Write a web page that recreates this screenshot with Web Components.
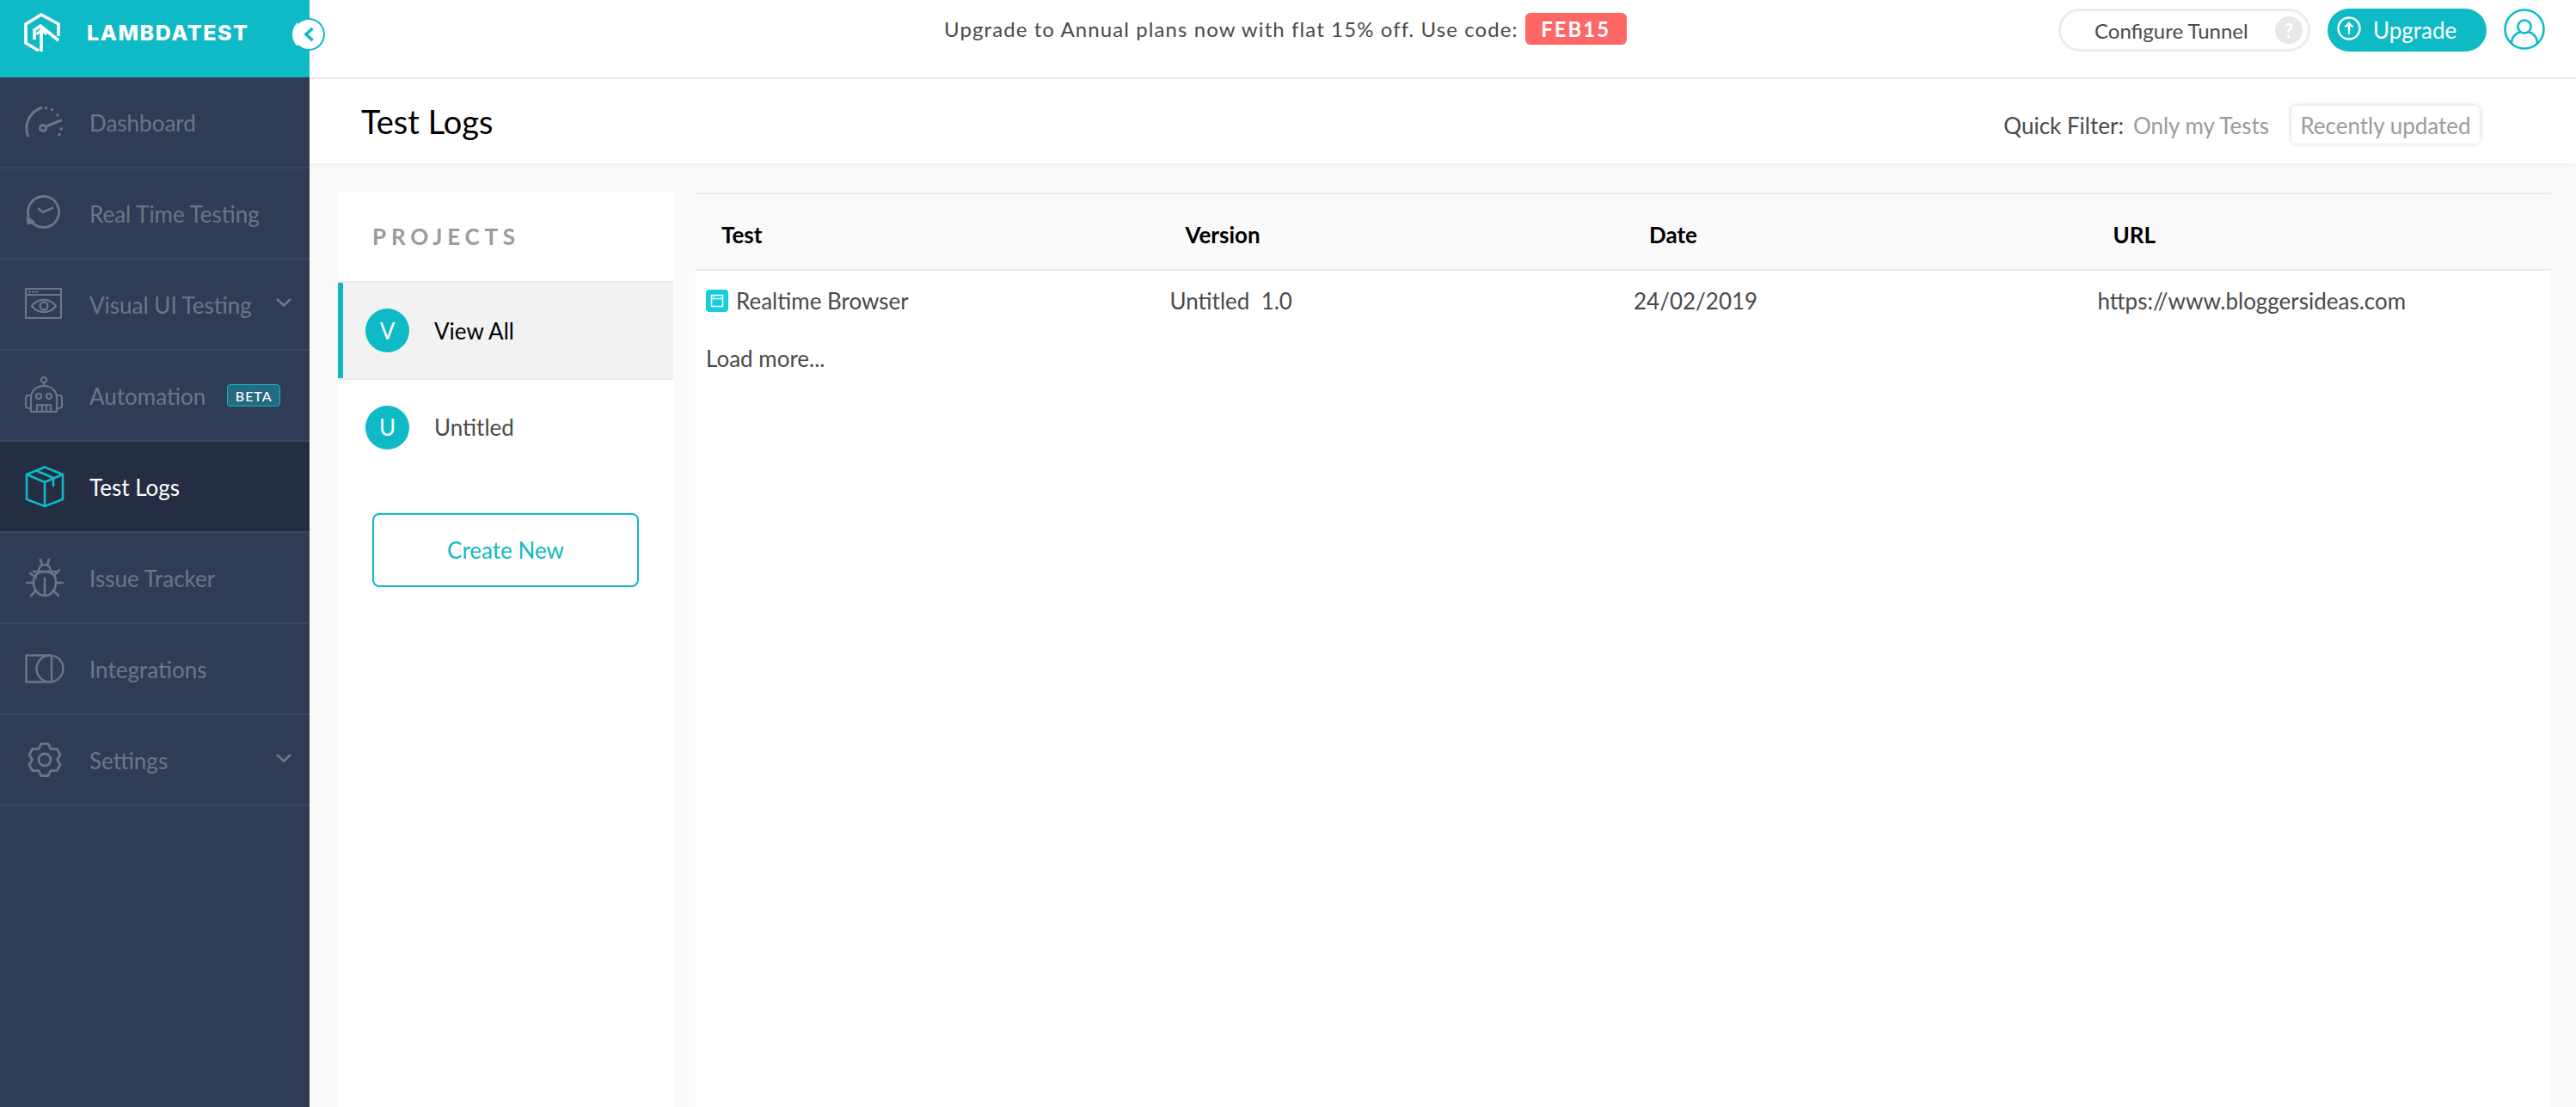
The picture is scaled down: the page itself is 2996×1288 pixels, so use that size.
<!DOCTYPE html>
<html>
<head>
<meta charset="utf-8">
<title>Test Logs</title>
<style>
  html, body { margin: 0; height: 100%; overflow: hidden; background: #fafafa; }
  body { font-family: Lato, "Open Sans", sans-serif; }
</style>
</head>
<body>
<lt-app>
  <lt-sidebar slot="sidebar">
    <lt-nav-item label="Dashboard">
      <svg slot="icon" viewBox="0 0 48 48" fill="none" stroke="currentColor" stroke-width="3" stroke-linecap="round">
        <path d="M8.5 40A25 25 0 0 1 24 7.5"/>
        <circle cx="26" cy="31" r="3.6"/>
        <path d="M30 29L47 22"/>
        <path d="M29.5 7.7h.1M36.5 9.5h.1M43 16h.1M47 32h.1M45 38.5h.1" stroke-width="3.4"/>
      </svg>
    </lt-nav-item>
    <lt-nav-item label="Real Time Testing">
      <svg slot="icon" viewBox="0 0 48 48" fill="none" stroke="currentColor" stroke-width="2.8" stroke-linecap="round" stroke-linejoin="round">
        <path d="M9.2 27A18 18 0 1 1 12 33"/>
        <path d="M8 29l1 7 6-1.5z" fill="currentColor"/>
        <path d="M21 19l5 4 11-5"/>
      </svg>
    </lt-nav-item>
    <lt-nav-item label="Visual UI Testing" chevron>
      <svg slot="icon" viewBox="0 0 48 48" fill="none" stroke="currentColor" stroke-width="2.2" stroke-linecap="round" stroke-linejoin="round">
        <rect x="6" y="6" width="41" height="34"/>
        <path d="M6 13h41"/>
        <path d="M10 9.7h1M14 9.7h1M18 9.7h1"/>
        <path d="M13 26c7-9.5 21-9.5 28 0-7 9.5-21 9.5-28 0z"/>
        <circle cx="27" cy="26" r="4.4"/>
      </svg>
    </lt-nav-item>
    <lt-nav-item label="Automation" beta>
      <svg slot="icon" viewBox="0 0 48 48" fill="none" stroke="currentColor" stroke-width="2.2" stroke-linecap="round" stroke-linejoin="round">
        <circle cx="27" cy="6" r="3.2"/>
        <path d="M27 9v4"/>
        <path d="M12 43V27c0-8 6-14 15-14s15 6 15 14v16z"/>
        <path d="M12 24H9c-3 0-3 2-3 3v9c0 2 2 3 4 3h2M42 24h3c3 0 3 2 3 3v9c0 2-2 3-4 3h-2"/>
        <circle cx="21" cy="25" r="3"/>
        <circle cx="33" cy="25" r="3"/>
        <path d="M19 43v-8h16v8M25 35v8M30 35v8"/>
      </svg>
    </lt-nav-item>
    <lt-nav-item label="Test Logs" active>
      <svg slot="icon" viewBox="0 0 48 48" fill="none" stroke="currentColor" stroke-width="2.6" stroke-linejoin="round" stroke-linecap="round">
        <path d="M28 1.5L49 10v29L28 47 7 39V10z"/>
        <path d="M7 10l21 9 21-9M28 19v28"/>
        <path d="M18 5.5L38 14v9"/>
      </svg>
    </lt-nav-item>
    <lt-nav-item label="Issue Tracker">
      <svg slot="icon" viewBox="0 0 48 48" fill="none" stroke="currentColor" stroke-width="2.6" stroke-linecap="round" stroke-linejoin="round">
        <path d="M15 17h26"/>
        <path d="M15 30c0-9 5-13 13-13s13 4 13 13-6 15-13 15-13-6-13-15z"/>
        <path d="M21 17c0-5 3-8 7-8s7 3 7 8"/>
        <path d="M23 3l2 6M33 3l-2 6"/>
        <path d="M28 25v19"/>
        <path d="M7 30h8M41 30h8M11 19l7 5M45 15l-6 7M12 45l6-6M44 45l-6-6"/>
      </svg>
    </lt-nav-item>
    <lt-nav-item label="Integrations">
      <svg slot="icon" viewBox="0 0 48 48" fill="none" stroke="currentColor" stroke-width="2.4" stroke-linejoin="round">
        <path d="M34 8.5H6.500V39.500H34"/>
        <circle cx="34" cy="24" r="15.500"/>
        <path d="M36 8.500V39.500"/>
      </svg>
    </lt-nav-item>
    <lt-nav-item label="Settings" chevron>
      <svg slot="icon" viewBox="0 0 48 48" fill="none" stroke="currentColor" stroke-width="2.800" stroke-linejoin="round">
        <path transform="translate(28 24)" d="M-3.900-18.600L3.900-18.600L7.200-12.600L14.100-12.700L18.100-5.900L14.500 0L18.100 5.900L14.100 12.700L7.200 12.600L3.900 18.600L-3.900 18.600L-7.200 12.600L-14.100 12.700L-18.100 5.900L-14.500 0L-18.100-5.900L-14.100-12.700L-7.200-12.600z"/>
        <circle cx="28" cy="24" r="7"/>
      </svg>
    </lt-nav-item>
  </lt-sidebar>

  <lt-topbar slot="topbar"></lt-topbar>
  <lt-page-header slot="header" title-text="Test Logs"></lt-page-header>

  <lt-projects slot="projects">
    <lt-project-item name="View All" active></lt-project-item>
    <lt-project-item name="Untitled"></lt-project-item>
  </lt-projects>

  <lt-log-table slot="logs"></lt-log-table>
</lt-app>

<script>
class LtApp extends HTMLElement {
  constructor() {
    super();
    this.attachShadow({ mode: 'open' });
    this.shadowRoot.innerHTML = `
      <style>
        :host { display: grid; grid-template-columns: 360px 1fr; height: 100vh; overflow: hidden; }
        .main { display: flex; flex-direction: column; min-width: 0; height: 100vh; }
        .content { flex: 1; min-height: 0; display: flex; gap: 26px; padding: 34px 29px 0 33px; }
      </style>
      <slot name="sidebar"></slot>
      <div class="main">
        <slot name="topbar"></slot>
        <slot name="header"></slot>
        <div class="content">
          <slot name="projects"></slot>
          <slot name="logs"></slot>
        </div>
      </div>`;
  }
}

class LtSidebar extends HTMLElement {
  constructor() {
    super();
    this.attachShadow({ mode: 'open' });
    this.shadowRoot.innerHTML = `
      <style>
        :host { display: block; position: relative; background: #303c56; height: 100vh; z-index: 2; }
        .brand { height: 90px; background: #0ebac5; display: flex; align-items: center; padding-left: 28px; gap: 31px; box-sizing: border-box; }
        .brand svg { width: 42px; height: 46px; margin-top: -14px; }
        .brand span { color: #fff; font: 800 25px Inter, Roboto, sans-serif; letter-spacing: 1.55px; margin-top: -14px; }
        .toggle { position: absolute; left: 340px; top: 21px; width: 38px; height: 38px; border-radius: 50%; background: #fff; border: 2px solid #0ebac5; border-left-color: #fff; border-bottom-color: #0ebac5; box-sizing: border-box; display: flex; align-items: center; justify-content: center; }
        .toggle svg { width: 14px; height: 18px; }
      </style>
      <div class="brand">
        <svg viewBox="0 0 42 46" fill="none" stroke="#fff" stroke-width="3.600" stroke-linejoin="miter">
          <path d="M17 44L2 35V13L20 2l20 11v14"/>
          <path d="M12 31V20l7-5 21 17"/>
          <path d="M20 45V20"/>
          <path d="M14.500 25L20 19.500 26 25" stroke-width="3"/>
        </svg>
        <span>LAMBDATEST</span>
      </div>
      <div class="toggle">
        <svg viewBox="0 0 14 18" fill="none" stroke="#0ebac5" stroke-width="3.600"><path d="M11.500 2L4 9l7.500 7"/></svg>
      </div>
      <slot></slot>`;
  }
}

class LtNavItem extends HTMLElement {
  constructor() {
    super();
    this.attachShadow({ mode: 'open' });
  }
  connectedCallback() {
    const label = this.getAttribute('label');
    this.shadowRoot.innerHTML = `
      <style>
        :host { display: flex; align-items: center; height: 106px; box-sizing: border-box; border-bottom: 2px solid #3a4762; padding: 0 21px 0 24px; color: #6c7588; font-size: 26px; }
        :host([active]) { background: #242d42; color: #fff; }
        ::slotted(svg) { width: 48px; height: 48px; flex: none; overflow: visible; }
        :host([active]) ::slotted(svg) { color: #0ebac5; }
        .label { margin-left: 32px; white-space: nowrap; padding-top: 2px; }
        .beta { margin-left: 25px; height: 26px; width: 62px; box-sizing: border-box; display: flex; align-items: center; justify-content: center; background: #246a80; border: 1.500px solid #0ebac5; border-radius: 4px; color: #fff; font-size: 16px; font-weight: 500; letter-spacing: 1px; }
        .chev { margin-left: auto; width: 18px; height: 10px; margin-top: -4px; }
      </style>
      <slot name="icon"></slot>
      <span class="label">${label}</span>
      ${this.hasAttribute('beta') ? '<span class="beta">BETA</span>' : ''}
      ${this.hasAttribute('chevron') ? '<svg class="chev" viewBox="0 0 18 10" fill="none" stroke="#6c7588" stroke-width="2.800"><path d="M1 1l8 7.500L17 1"/></svg>' : ''}`;
  }
}

class LtTopbar extends HTMLElement {
  constructor() {
    super();
    this.attachShadow({ mode: 'open' });
    this.shadowRoot.innerHTML = `
      <style>
        :host { display: flex; align-items: flex-start; height: 92px; box-sizing: border-box; border-bottom: 2px solid #ececec; background: #fff; color: #4a4a4a; flex: none; }
        .promo { margin: 15px 0 0 738px; display: flex; align-items: center; gap: 8px; font-size: 24px; letter-spacing: 1.090px; white-space: nowrap; height: 37px; }
        .code { background: #ff6767; color: #fff; font-weight: 700; border-radius: 6px; width: 118px; height: 37px; display: flex; align-items: center; justify-content: center; letter-spacing: 2px; }
        .right { margin: 10px 36px 0 auto; display: flex; gap: 20px; align-items: flex-start; }
        .tunnel { width: 293px; height: 50px; box-sizing: border-box; border: 3px solid #ececec; border-radius: 25px; display: flex; align-items: center; padding-left: 39px; font-size: 24px; white-space: nowrap; }
        .help { margin-left: auto; margin-right: 6px; width: 32px; height: 32px; border-radius: 50%; background: #e8e8e8; color: #fff; font-weight: 700; font-size: 22px; display: flex; align-items: center; justify-content: center; }
        .upgrade { width: 185px; height: 50px; border-radius: 25px; background: #0ebac5; color: #fff; display: flex; align-items: center; padding-left: 11px; box-sizing: border-box; font-size: 26px; gap: 14px; }
        .upgrade svg { width: 28px; height: 28px; margin-top: -4px; }
        .user { width: 48px; height: 48px; }
      </style>
      <div class="promo"><span>Upgrade to Annual plans now with flat 15% off. Use code:</span><span class="code">FEB15</span></div>
      <div class="right">
        <div class="tunnel"><span>Configure Tunnel</span><span class="help">?</span></div>
        <div class="upgrade">
          <svg viewBox="0 0 28 28" fill="none" stroke="#fff" stroke-width="2.400"><circle cx="14" cy="14" r="12.500"/><path d="M14 21V8M9.500 12.500L14 8l4.500 4.500"/></svg>
          <span>Upgrade</span>
        </div>
        <svg class="user" viewBox="0 0 48 48" fill="none" stroke="#0ebac5" stroke-width="2.600">
          <circle cx="24" cy="24" r="22.500"/>
          <circle cx="24" cy="21" r="7.500"/>
          <path d="M9 41c0-9 6-13 10-13.500M39 41c0-9-6-13-10-13.500"/>
        </svg>
      </div>`;
  }
}

class LtPageHeader extends HTMLElement {
  constructor() {
    super();
    this.attachShadow({ mode: 'open' });
  }
  connectedCallback() {
    this.shadowRoot.innerHTML = `
      <style>
        :host { display: flex; align-items: center; height: 98px; flex: none; background: #fff; box-shadow: 0 2px 8px rgba(0,0,0,.05); padding: 0 112px 0 60px; box-sizing: border-box; position: relative; }
        h1 { margin: 0; font-size: 38px; font-weight: 400; color: #000; }
        .filter { margin-left: auto; display: flex; align-items: center; font-size: 26px; color: #4a4a4a; white-space: nowrap; padding-top: 10px; }
        .opt { color: #9b9b9b; margin-left: 11px; }
        .box { margin: 0 0 2px 26px; height: 44px; width: 219px; box-sizing: border-box; padding-top: 2px; display: flex; align-items: center; justify-content: center; border-radius: 6px; box-shadow: 0 0 6px rgba(0,0,0,.18); color: #9b9b9b; }
      </style>
      <h1>${this.getAttribute('title-text')}</h1>
      <div class="filter">
        <span>Quick Filter:</span>
        <span class="opt">Only my Tests</span>
        <span class="box">Recently updated</span>
      </div>`;
  }
}

class LtProjects extends HTMLElement {
  constructor() {
    super();
    this.attachShadow({ mode: 'open' });
    this.shadowRoot.innerHTML = `
      <style>
        :host { display: block; width: 390px; flex: none; background: #fff; }
        h2 { margin: 0; height: 103px; box-sizing: border-box; padding: 33px 0 0 40px; font-size: 26px; font-weight: 700; letter-spacing: 5.800px; color: #9b9b9b; line-height: 36px; }
        .new { margin: 42px 40px 0; height: 86px; box-sizing: border-box; border: 2px solid #0ebac5; border-radius: 8px; display: flex; align-items: center; justify-content: center; color: #0ebac5; font-size: 26px; }
      </style>
      <h2>PROJECTS</h2>
      <slot></slot>
      <div class="new">Create New</div>`;
  }
}

class LtProjectItem extends HTMLElement {
  constructor() {
    super();
    this.attachShadow({ mode: 'open' });
  }
  connectedCallback() {
    const name = this.getAttribute('name');
    this.shadowRoot.innerHTML = `
      <style>
        :host { display: flex; align-items: center; height: 113px; box-sizing: border-box; padding: 0 0 5px 32px; border-top: 2px solid transparent; color: #4a4a4a; font-size: 26px; }
        :host([active]) { height: 115px; padding-bottom: 0; background: #f2f2f2; color: #000; border-top-color: #ebebeb; border-bottom: 2px solid #ebebeb; box-shadow: inset 6px 0 0 #0ebac5; }
        .avatar { width: 51px; height: 51px; border-radius: 50%; background: #0ebac5; color: #fff; display: flex; align-items: center; justify-content: center; flex: none; }
        .name { margin-left: 29px; }
      </style>
      <span class="avatar">${name[0]}</span>
      <span class="name">${name}</span>`;
  }
}

class LtLogTable extends HTMLElement {
  constructor() {
    super();
    this.attachShadow({ mode: 'open' });
    this.shadowRoot.innerHTML = `
      <style>
        :host { display: block; flex: 1; min-width: 0; background: #fff; color: #4a4a4a; font-size: 26px; }
        .row { display: grid; grid-template-columns: repeat(4, 25%); }
        .head { height: 91px; box-sizing: border-box; border-top: 2px solid #ebebeb; border-bottom: 2px solid #ebebeb; background: #fafafa; align-items: center; color: #000; font-weight: 700; }
        .head span { padding: 7px 0 0 30px; }
        .body { height: 70px; align-items: center; }
        .body > span { padding-left: 12px; display: flex; align-items: center; white-space: pre; }
        .rt { width: 26px; height: 26px; margin-right: 9px; flex: none; }
        .more { padding-left: 12px; margin-top: 14px; line-height: 36px; }
      </style>
      <div class="row head"><span>Test</span><span>Version</span><span>Date</span><span>URL</span></div>
      <div class="row body">
        <span>
          <svg class="rt" viewBox="0 0 26 26"><rect width="26" height="26" rx="4" fill="#12cfe0"/><path d="M6.500 6.500h13v13h-13zM6.500 10.500h13" fill="none" stroke="#fff" stroke-width="1.600"/><path d="M8.500 8.500h1" stroke="#fff" stroke-width="1.400"/></svg>Realtime Browser</span>
        <span>Untitled  1.0</span>
        <span>24/02/2019</span>
        <span>https://www.bloggersideas.com</span>
      </div>
      <div class="more">Load more...</div>`;
  }
}

customElements.define('lt-app', LtApp);
customElements.define('lt-sidebar', LtSidebar);
customElements.define('lt-nav-item', LtNavItem);
customElements.define('lt-topbar', LtTopbar);
customElements.define('lt-page-header', LtPageHeader);
customElements.define('lt-projects', LtProjects);
customElements.define('lt-project-item', LtProjectItem);
customElements.define('lt-log-table', LtLogTable);
</script>
</body>
</html>
